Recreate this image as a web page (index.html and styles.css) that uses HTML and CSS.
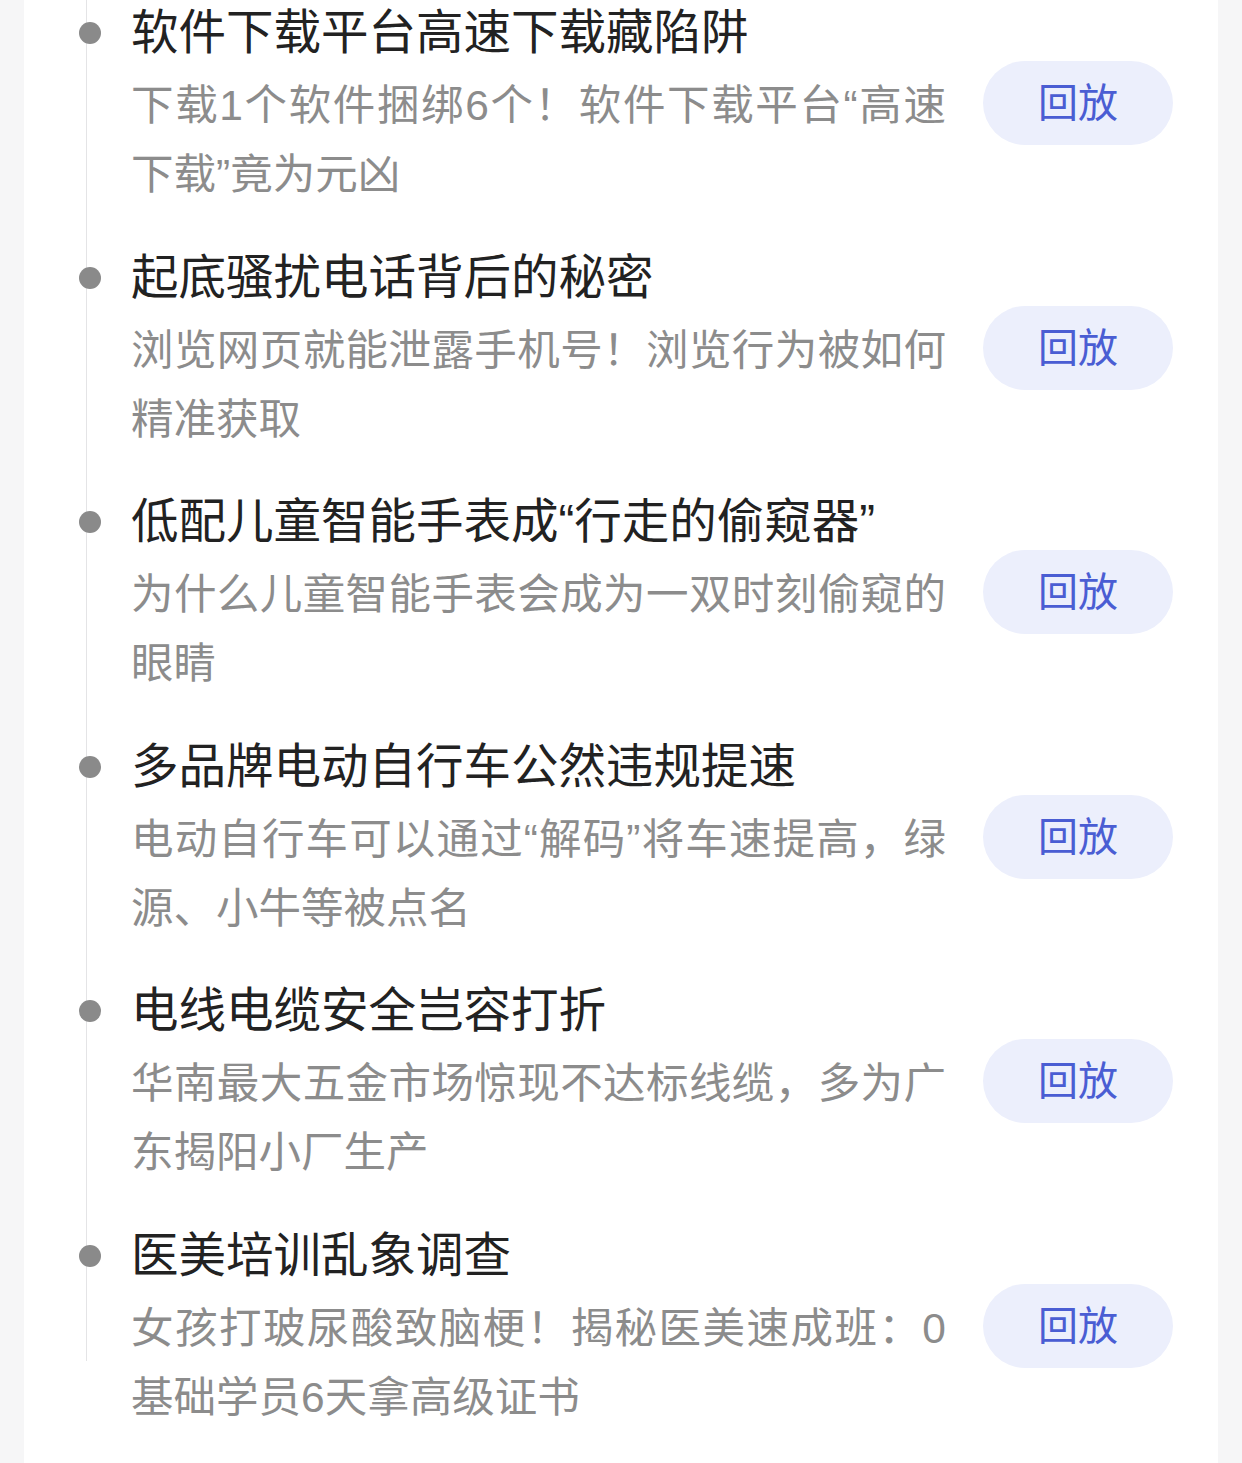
FILE: index.html
```html
<!DOCTYPE html>
<html lang="zh-CN">
<head>
    <meta charset="UTF-8">
    <meta name="viewport" content="width=device-width, initial-scale=1.0">
    <title>节目回放</title>
    <link rel="stylesheet" href="styles.css">
</head>
<body>
    <div class="card">
        <ul class="timeline">
            <li class="item">
                <span class="dot"></span>
                <h3 class="title">软件下载平台高速下载藏陷阱</h3>
                <p class="desc">下载1个软件捆绑6个！软件下载平台“高速下载”竟为元凶</p>
                <a class="replay" href="#">回放</a>
            </li>
            <li class="item">
                <span class="dot"></span>
                <h3 class="title">起底骚扰电话背后的秘密</h3>
                <p class="desc">浏览网页就能泄露手机号！浏览行为被如何精准获取</p>
                <a class="replay" href="#">回放</a>
            </li>
            <li class="item">
                <span class="dot"></span>
                <h3 class="title">低配儿童智能手表成“行走的偷窥器”</h3>
                <p class="desc">为什么儿童智能手表会成为一双时刻偷窥的眼睛</p>
                <a class="replay" href="#">回放</a>
            </li>
            <li class="item">
                <span class="dot"></span>
                <h3 class="title">多品牌电动自行车公然违规提速</h3>
                <p class="desc">电动自行车可以通过“解码”将车速提高，绿源、小牛等被点名</p>
                <a class="replay" href="#">回放</a>
            </li>
            <li class="item">
                <span class="dot"></span>
                <h3 class="title">电线电缆安全岂容打折</h3>
                <p class="desc">华南最大五金市场惊现不达标线缆，多为广东揭阳小厂生产</p>
                <a class="replay" href="#">回放</a>
            </li>
            <li class="item">
                <span class="dot"></span>
                <h3 class="title">医美培训乱象调查</h3>
                <p class="desc">女孩打玻尿酸致脑梗！揭秘医美速成班：0基础学员6天拿高级证书</p>
                <a class="replay" href="#">回放</a>
            </li>
        </ul>
    </div>
</body>
</html>
```

FILE: styles.css
```css
body {
    margin: 0;
    background-color: #f6f6f7;
    font-family: "Liberation Sans", "Noto Sans CJK SC", sans-serif;
}
.card {
    margin: 0 24px;
    min-height: 1463px;
    background: #ffffff;
}
.timeline {
    position: relative;
    list-style: none;
    margin: 0;
    padding: 1px 0 0 0;
}
/* vertical rail behind the dots */
.timeline::before {
    content: "";
    position: absolute;
    left: 62px;
    top: 0;
    bottom: 71px;
    width: 1px;
    background: #e4e4e6;
}
.item {
    position: relative;
    display: grid;
    grid-template-columns: 107px 815px 1fr;
    grid-template-rows: 64px auto;
    row-gap: 6px;
    margin-bottom: 36.6px;
}
.dot {
    grid-column: 1;
    grid-row: 1;
    align-self: center;
    width: 22px;
    height: 22px;
    margin-left: 55px;
    border-radius: 50%;
    background: #8a8a8a;
}
.title {
    grid-column: 2 / 4;
    grid-row: 1;
    margin: 0;
    font-size: 47.5px;
    line-height: 64px;
    font-weight: normal;
    color: #222222;
    white-space: nowrap;
}
.desc {
    grid-column: 2;
    grid-row: 2;
    margin: 0;
    font-size: 42.5px;
    line-height: 69px;
    color: #8c8c8c;
    text-align: justify;
}
.replay {
    grid-column: 3;
    grid-row: 1 / 3;
    align-self: start;
    justify-self: end;
    margin: 60px 45px 0 0;
    width: 190px;
    height: 84px;
    border-radius: 42px;
    background: #eceffc;
    color: #4a5dd3;
    font-size: 40px;
    line-height: 84px;
    text-align: center;
    text-decoration: none;
}
```
